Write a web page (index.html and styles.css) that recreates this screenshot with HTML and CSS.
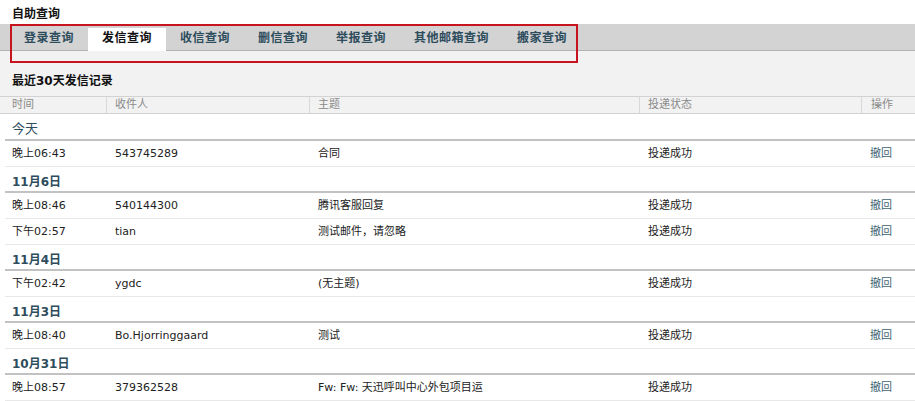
FILE: index.html
```html
<!DOCTYPE html>
<html lang="zh-CN">
<head>
<meta charset="utf-8">
<title>自助查询</title>
<link rel="stylesheet" href="styles.css">
</head>
<body>
<div class="page">
  <div class="title">自助查询</div>
  <div class="tabbar">
    <div class="tab">登录查询</div>
    <div class="tab active">发信查询</div>
    <div class="tab">收信查询</div>
    <div class="tab">删信查询</div>
    <div class="tab">举报查询</div>
    <div class="tab">其他邮箱查询</div>
    <div class="tab">搬家查询</div>
  </div>
  <div class="highlight"></div>
  <div class="panel">
    <div class="section-head">最近30天发信记录</div>
    <div class="row thead">
      <div class="c c1">时间</div>
      <div class="c c2">收件人</div>
      <div class="c c3">主题</div>
      <div class="c c4">投递状态</div>
      <div class="c c5">操作</div>
    </div>
  </div>
  <div class="list">
    <div class="group today">今天</div>
    <div class="row item">
      <div class="c c1">晚上06:43</div><div class="c c2">543745289</div><div class="c c3">合同</div><div class="c c4">投递成功</div><div class="c c5"><a class="act">撤回</a></div>
    </div>
    <div class="group">11月6日</div>
    <div class="row item">
      <div class="c c1">晚上08:46</div><div class="c c2">540144300</div><div class="c c3">腾讯客服回复</div><div class="c c4">投递成功</div><div class="c c5"><a class="act">撤回</a></div>
    </div>
    <div class="row item">
      <div class="c c1">下午02:57</div><div class="c c2">tian</div><div class="c c3">测试邮件，请忽略</div><div class="c c4">投递成功</div><div class="c c5"><a class="act">撤回</a></div>
    </div>
    <div class="group">11月4日</div>
    <div class="row item">
      <div class="c c1">下午02:42</div><div class="c c2">ygdc</div><div class="c c3">(无主题)</div><div class="c c4">投递成功</div><div class="c c5"><a class="act">撤回</a></div>
    </div>
    <div class="group">11月3日</div>
    <div class="row item">
      <div class="c c1">晚上08:40</div><div class="c c2">Bo.Hjorringgaard</div><div class="c c3">测试</div><div class="c c4">投递成功</div><div class="c c5"><a class="act">撤回</a></div>
    </div>
    <div class="group">10月31日</div>
    <div class="row item">
      <div class="c c1">晚上08:57</div><div class="c c2">379362528</div><div class="c c3">Fw: Fw: 天迅呼叫中心外包项目运</div><div class="c c4">投递成功</div><div class="c c5"><a class="act">撤回</a></div>
    </div>
  </div>
</div>
</body>
</html>
```

FILE: styles.css
```css
* { box-sizing: border-box; }
html, body { margin: 0; padding: 0; background: #fff; }
body {
  font-family: "DejaVu Sans", "Noto Sans CJK SC", sans-serif;
  font-size: 11px;
  color: #222;
}
.page { position: relative; width: 915px; }

.title {
  height: 24px;
  padding: 6px 0 0 12px;
  font-size: 12px;
  line-height: 16px;
  font-weight: bold;
  color: #111;
}

.tabbar {
  height: 27px;
  background: #d3d3d3;
  border-bottom: 1px solid #b2b2b2;
  display: flex;
  align-items: flex-end;
  padding-left: 10px;
}
.tab {
  height: 22px;
  line-height: 21px;
  padding: 0 14px;
  font-size: 12px;
  font-weight: bold;
  letter-spacing: 0.5px;
  color: #2d4c5c;
}
.tab.active {
  background: #fff;
  color: #111;
  height: 23px;
  margin-bottom: -1px;
}

.highlight {
  position: absolute;
  left: 10px;
  top: 24px;
  width: 568px;
  height: 39px;
  border: 2px solid #c8141e;
}

.panel { background: #f2f2f2; }
.section-head {
  height: 45px;
  padding: 22px 0 0 12px;
  font-size: 12px;
  line-height: 16px;
  font-weight: bold;
  color: #111;
}

.row {
  display: grid;
  grid-template-columns: 107px 203px 330px 222px 1fr;
}
.thead {
  height: 18px;
  border-top: 1px solid #d2d2d2;
  border-bottom: 1px solid #d2d2d2;
  color: #8a8a8a;
  line-height: 16px;
}
.thead .c { border-right: 1px solid #d8d8d8; }
.thead .c5 { border-right: 0; }
.c { padding-left: 8px; white-space: nowrap; overflow: hidden; }
.c1 { padding-left: 12px; }
.c5 { padding-left: 9px; }

.list { padding: 1px 0 0 5px; }
.list .row { grid-template-columns: 102px 203px 330px 222px 1fr; }
.list .c1 { padding-left: 7px; }
.list .c5 { padding-left: 8px; }

.group {
  height: 26px;
  padding: 7px 0 0 7px;
  line-height: 16px;
  font-size: 12px;
  font-weight: bold;
  color: #2d4c5c;
  border-bottom: 2px solid #c2c2c2;
}
.group.today {
  font-weight: normal;
  font-size: 13px;
  padding-top: 6px;
}
.item {
  height: 26px;
  line-height: 25px;
  border-bottom: 1px solid #e8e8e8;
  color: #222;
}
.act { color: #3e6272; text-decoration: none; }
```
